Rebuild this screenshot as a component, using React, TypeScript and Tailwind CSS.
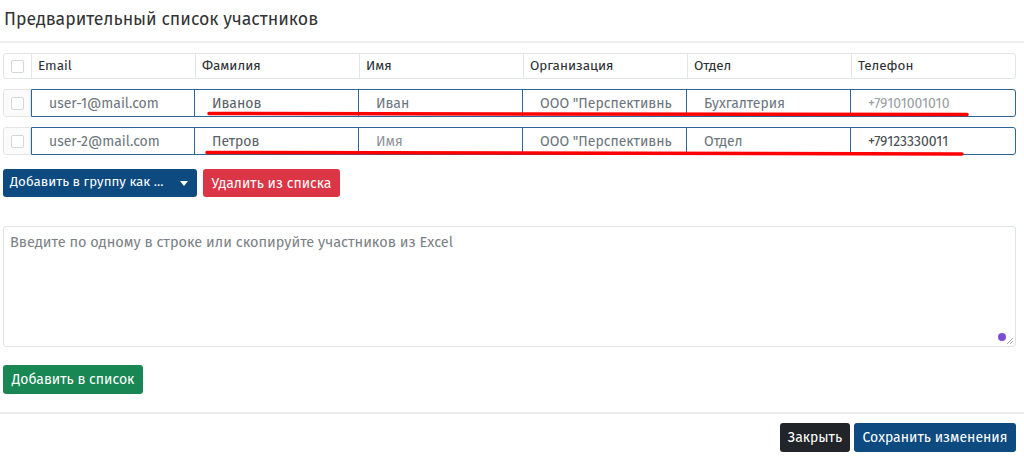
import React from "react";

const font = { fontFamily: '"Fira Sans", "Noto Sans", "Open Sans", sans-serif' };

const cols = ["Email", "Фамилия", "Имя", "Организация", "Отдел", "Телефон"];

type Cell = { t: string; c: string };
const rows: Cell[][] = [
  [
    { t: "user-1@mail.com", c: "text-[#6c757d]" },
    { t: "Иванов", c: "text-[#5a6066]" },
    { t: "Иван", c: "text-[#6c757d]" },
    { t: 'ООО "Перспективнь', c: "text-[#6c757d]" },
    { t: "Бухгалтерия", c: "text-[#6c757d]" },
    { t: "+79101001010", c: "text-[#9aa0a6]" },
  ],
  [
    { t: "user-2@mail.com", c: "text-[#6c757d]" },
    { t: "Петров", c: "text-[#5a6066]" },
    { t: "Имя", c: "text-[#8d9398]" },
    { t: 'ООО "Перспективнь', c: "text-[#6c757d]" },
    { t: "Отдел", c: "text-[#6c757d]" },
    { t: "+79123330011", c: "text-[#464b50]" },
  ],
];

function Checkbox() {
  return <div className="w-[13px] h-[13px] rounded-[2px] border border-[#d6d6d6] bg-white" />;
}

export default function App() {
  return (
    <div className="relative w-[1024px] h-[457px] bg-white overflow-hidden" style={font}>
      <div className="h-[41px] pl-[4px] flex items-center">
        <h1 className="text-[17.7px] text-[#333] leading-none pb-[2px]">Предварительный список участников</h1>
      </div>
      <div className="h-[2px] bg-[#ebedef]" />

      <div className="pl-[3px] pr-[8px] pt-[10px]">
        {/* header */}
        <div className="flex h-[26px] border border-[#e3e6e9] rounded-[3px]">
          <div className="w-[28px] shrink-0 flex items-center justify-center border-r border-[#e3e6e9]">
            <Checkbox />
          </div>
          {cols.map((c, i) => (
            <div
              key={c}
              className={`${i === 5 ? "flex-1" : "w-[164px] border-r border-[#e3e6e9]"} flex items-center pl-[6px] text-[13.5px] text-[#2a2e33]`}
            >
              {c}
            </div>
          ))}
        </div>

        {rows.map((r, ri) => (
          <div key={ri} className="flex h-[28px] mt-[10px]">
            <div className="w-[28px] shrink-0 flex items-center justify-center border border-[#e3e6e9] rounded-l-[3px] bg-[#fbfbfb]">
              <Checkbox />
            </div>
            <div className="flex flex-1 border border-[#2d6496] rounded-r-[3px]">
              {r.map((cell, i) => (
                <div
                  key={i}
                  className={`${i === 5 ? "flex-1" : i === 0 ? "w-[163px] border-r border-[#2d6496]" : "w-[164px] border-r border-[#2d6496]"} flex items-center pl-[17px] text-[14px] ${cell.c}`}
                >
                  {cell.t}
                </div>
              ))}
            </div>
          </div>
        ))}

        {/* buttons */}
        <div className="flex gap-[6px] mt-[14px]">
          <button className="h-[28px] w-[194px] rounded-[3px] bg-[#0c4a80] text-white text-[13.3px] flex items-center pl-[7px] pr-[9px] justify-between">
            <span>Добавить в группу как ...</span>
            <span className="w-0 h-0 border-l-[4px] border-r-[4px] border-t-[5px] border-l-transparent border-r-transparent border-t-white" />
          </button>
          <button className="h-[28px] w-[137px] rounded-[3px] bg-[#dc3545] text-white text-[14px] flex items-center justify-center">
            Удалить из списка
          </button>
        </div>

        {/* textarea */}
        <div className="relative mt-[29px] h-[121px] border border-[#dfe3e7] rounded-[3px]">
          <div className="pl-[6px] pt-[5px] text-[14.5px] text-[#7b8086]">
            Введите по одному в строке или скопируйте участников из Excel
          </div>
          <div className="absolute right-[9px] bottom-[5px] w-[8px] h-[8px] rounded-full bg-[#7a4fd6]" />
          <svg className="absolute right-[1px] bottom-[1px]" width="8" height="8" viewBox="0 0 8 8">
            <line x1="1" y1="7" x2="7" y2="1" stroke="#9a9a9a" strokeWidth="0.8" />
            <line x1="4" y1="7" x2="7" y2="4" stroke="#9a9a9a" strokeWidth="0.8" />
          </svg>
        </div>

        <button className="mt-[18px] h-[29px] w-[140px] rounded-[3px] bg-[#198754] text-white text-[14px] flex items-center justify-center">
          Добавить в список
        </button>
      </div>

      <div className="mt-[18px] h-[2px] bg-[#ebedef]" />

      <div className="flex justify-end gap-[4px] pr-[8px] pt-[9px]">
        <button className="h-[29px] w-[70px] rounded-[3px] bg-[#212529] text-white text-[14px] flex items-center justify-center">
          Закрыть
        </button>
        <button className="h-[29px] w-[162px] rounded-[3px] bg-[#0c4a80] text-white text-[14px] flex items-center justify-center">
          Сохранить изменения
        </button>
      </div>

      <svg className="absolute left-0 top-0 pointer-events-none" width="1024" height="457">
        <line x1="209" y1="113.5" x2="967" y2="114.5" stroke="#ff0000" strokeWidth="3.5" strokeLinecap="round" />
        <line x1="207" y1="152.5" x2="962" y2="154" stroke="#ff0000" strokeWidth="3.5" strokeLinecap="round" />
      </svg>
    </div>
  );
}
